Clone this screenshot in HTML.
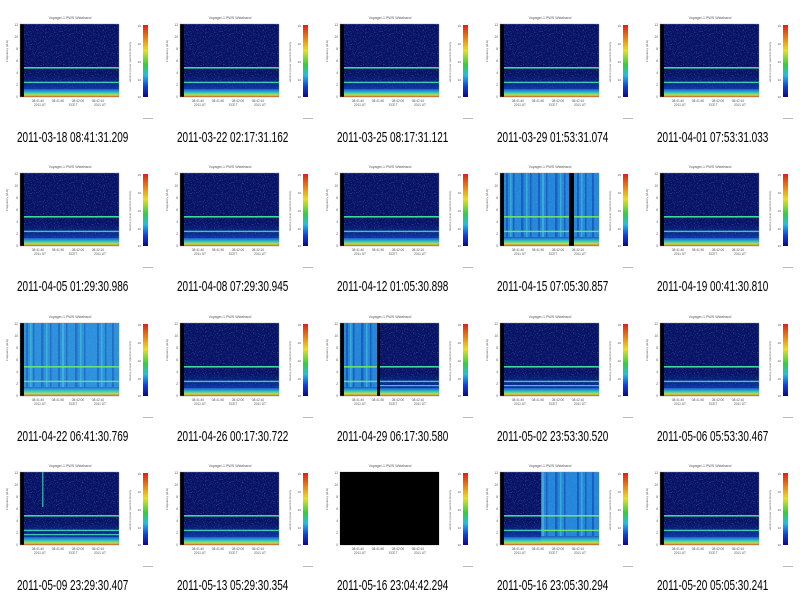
<!DOCTYPE html>
<html><head><meta charset="utf-8"><style>
body{margin:0;width:800px;height:596px;background:#fff;position:relative;overflow:hidden;font-family:"Liberation Sans",sans-serif}
.c{position:absolute;width:160px;height:149px}
.c svg{position:absolute;left:0;top:0}
.cap{position:absolute;left:17px;top:128px;font-size:15px;line-height:20px;color:#000;white-space:nowrap;transform:scaleX(0.665);transform-origin:0 0}
</style></head><body>
<svg width="0" height="0" style="position:absolute">
<defs>
<filter id="nz" x="0" y="0" width="1" height="1"><feTurbulence type="fractalNoise" baseFrequency="0.9" numOctaves="1" seed="3"/><feColorMatrix type="matrix" values="0 0 0 0 0.15  0 0 0 0 0.4  0 0 0 0 1  0 0 0 2.2 -1.2"/></filter>
<linearGradient id="cb" x1="0" y1="0" x2="0" y2="1"><stop offset="0" stop-color="#e02010"/><stop offset="0.2" stop-color="#f08a10"/><stop offset="0.35" stop-color="#e8e020"/><stop offset="0.55" stop-color="#30d040"/><stop offset="0.7" stop-color="#20c0e0"/><stop offset="0.85" stop-color="#1040e0"/><stop offset="1" stop-color="#0a0a80"/></linearGradient>
<linearGradient id="bot" x1="0" y1="0" x2="0" y2="1"><stop offset="0" stop-color="#1a5ad0"/><stop offset="0.45" stop-color="#30c8c0"/><stop offset="0.75" stop-color="#c0e040"/><stop offset="1" stop-color="#e05020"/></linearGradient>
<linearGradient id="fade" x1="0" y1="0" x2="0" y2="1"><stop offset="0" stop-color="#1040c0" stop-opacity="0"/><stop offset="1" stop-color="#1050d0" stop-opacity="0.6"/></linearGradient>
<g id="dark">
<rect x="20" y="24" width="99" height="73" fill="#081264"/>
<rect x="20" y="24" width="99" height="73" filter="url(#nz)" opacity="0.8"/>
<rect x="20" y="75" width="99" height="14" fill="url(#fade)"/>
<rect x="20" y="67" width="99" height="1.6" fill="#40d8a0"/>
<rect x="20" y="81.7" width="99" height="1.4" fill="#40c8b0"/>
<rect x="20" y="89" width="99" height="8" fill="url(#bot)"/>
</g>
<g id="bright">
<rect x="20" y="24" width="99" height="73" fill="#2486d8"/>
<rect x="20" y="24" width="99" height="73" filter="url(#nz)" opacity="0.7"/>
<g fill="#1238a8" opacity="0.5"><rect x="26" y="24" width="2" height="65"/><rect x="33" y="24" width="1.5" height="65"/><rect x="41" y="24" width="2.5" height="65"/><rect x="50" y="24" width="1.5" height="65"/><rect x="58" y="24" width="2" height="65"/><rect x="66" y="24" width="1.5" height="65"/><rect x="75" y="24" width="2.5" height="65"/><rect x="84" y="24" width="1.5" height="65"/><rect x="97" y="24" width="2" height="65"/><rect x="105" y="24" width="1.5" height="65"/><rect x="112" y="24" width="2" height="65"/></g>
<g fill="#50d8d0" opacity="0.45"><rect x="30" y="24" width="1.5" height="65"/><rect x="46" y="24" width="1.5" height="65"/><rect x="62" y="24" width="2" height="65"/><rect x="80" y="24" width="1.5" height="65"/><rect x="101" y="24" width="1.5" height="65"/></g>
<rect x="20" y="67" width="99" height="1.6" fill="#70e070"/>
<rect x="20" y="81.7" width="99" height="1.4" fill="#70e070"/>
<rect x="20" y="88" width="99" height="9" fill="url(#bot)"/>
</g>
<g id="frame">
<text x="70" y="19" font-size="3.6" fill="#555" text-anchor="middle" font-family="Liberation Sans">Voyager-1 PWS Wideband</text>
<rect x="20" y="24" width="4" height="73" fill="#000"/>
<rect x="20" y="24" width="99" height="73" fill="none" stroke="#888" stroke-width="0.4"/>
<g font-size="3.2" fill="#555" font-family="Liberation Sans" text-anchor="end"><text x="18" y="26">12</text><text x="18" y="38">10</text><text x="18" y="50">8</text><text x="18" y="62">6</text><text x="18" y="74">4</text><text x="18" y="86">2</text><text x="18" y="98">0</text></g>
<text x="8" y="62" font-size="3" fill="#555" transform="rotate(-90 8 62)" font-family="Liberation Sans">Frequency (kHz)</text>
<rect x="143" y="25" width="5" height="72" fill="url(#cb)"/>
<text x="131" y="62" font-size="3" fill="#666" transform="rotate(-90 131 62)" font-family="Liberation Sans" text-anchor="middle">relative power spectral density</text>
<g font-size="3" fill="#555" font-family="Liberation Sans" text-anchor="end"><text x="141" y="27">10</text><text x="141" y="45">10</text><text x="141" y="63">10</text><text x="141" y="81">10</text><text x="141" y="98">10</text></g>
<g font-size="3.2" fill="#555" font-family="Liberation Sans" text-anchor="middle"><text x="38" y="102">08:41:40</text><text x="58" y="102">08:41:50</text><text x="78" y="102">08:42:00</text><text x="98" y="102">08:42:10</text><text x="40" y="106">2011 UT</text><text x="73" y="106">SCET</text><text x="100" y="106">2011 UT</text></g>
<rect x="143" y="118" width="10" height="0.8" fill="#aaa"/>
</g>
<clipPath id="cl04"><rect x="20" y="24" width="37" height="73"/></clipPath>
<clipPath id="cr04"><rect x="60" y="24" width="59" height="73"/></clipPath>
<clipPath id="cl16"><rect x="20" y="24" width="41" height="73"/></clipPath>
<clipPath id="cr16"><rect x="61" y="24" width="58" height="73"/></clipPath>
</defs></svg>

<div class="c" style="left:0;top:0"><svg width="160" height="149"><use href="#dark"/><use href="#frame"/></svg><div class="cap">2011-03-18 08:41:31.209</div></div>
<div class="c" style="left:160px;top:0"><svg width="160" height="149"><use href="#dark"/><use href="#frame"/></svg><div class="cap">2011-03-22 02:17:31.162</div></div>
<div class="c" style="left:320px;top:0"><svg width="160" height="149"><use href="#dark"/><use href="#frame"/></svg><div class="cap">2011-03-25 08:17:31.121</div></div>
<div class="c" style="left:480px;top:0"><svg width="160" height="149"><use href="#dark"/><use href="#frame"/></svg><div class="cap">2011-03-29 01:53:31.074</div></div>
<div class="c" style="left:640px;top:0"><svg width="160" height="149"><use href="#dark"/><use href="#frame"/></svg><div class="cap">2011-04-01 07:53:31.033</div></div>

<div class="c" style="left:0;top:149px"><svg width="160" height="149"><use href="#dark"/><use href="#frame"/></svg><div class="cap">2011-04-05 01:29:30.986</div></div>
<div class="c" style="left:160px;top:149px"><svg width="160" height="149"><use href="#dark"/><use href="#frame"/></svg><div class="cap">2011-04-08 07:29:30.945</div></div>
<div class="c" style="left:320px;top:149px"><svg width="160" height="149"><use href="#dark"/><use href="#frame"/></svg><div class="cap">2011-04-12 01:05:30.898</div></div>
<div class="c" style="left:480px;top:149px"><svg width="160" height="149"><use href="#bright"/><rect x="89" y="24" width="5" height="73" fill="#000"/><use href="#frame"/></svg><div class="cap">2011-04-15 07:05:30.857</div></div>
<div class="c" style="left:640px;top:149px"><svg width="160" height="149"><use href="#dark"/><use href="#frame"/></svg><div class="cap">2011-04-19 00:41:30.810</div></div>

<div class="c" style="left:0;top:299px"><svg width="160" height="149"><use href="#bright"/><rect x="20" y="24" width="99" height="73" fill="#60d0f0" opacity="0.15"/><use href="#frame"/></svg><div class="cap">2011-04-22 06:41:30.769</div></div>
<div class="c" style="left:160px;top:299px"><svg width="160" height="149"><use href="#dark"/><use href="#frame"/></svg><div class="cap">2011-04-26 00:17:30.722</div></div>
<div class="c" style="left:320px;top:299px"><svg width="160" height="149"><g clip-path="url(#cl04)"><use href="#bright"/></g><g clip-path="url(#cr04)"><use href="#dark"/><rect x="60" y="86" width="59" height="1.2" fill="#40c8b0"/></g><rect x="57" y="24" width="3" height="73" fill="#000"/><use href="#frame"/></svg><div class="cap">2011-04-29 06:17:30.580</div></div>
<div class="c" style="left:480px;top:299px"><svg width="160" height="149"><use href="#dark"/><rect x="20" y="86" width="99" height="1.2" fill="#40c8b0"/><use href="#frame"/></svg><div class="cap">2011-05-02 23:53:30.520</div></div>
<div class="c" style="left:640px;top:299px"><svg width="160" height="149"><use href="#dark"/><use href="#frame"/></svg><div class="cap">2011-05-06 05:53:30.467</div></div>

<div class="c" style="left:0;top:448px"><svg width="160" height="149"><use href="#dark"/><rect x="20" y="86" width="99" height="1.2" fill="#40c8b0"/><rect x="42" y="24" width="1.5" height="35" fill="#30a0a0"/><use href="#frame"/></svg><div class="cap">2011-05-09 23:29:30.407</div></div>
<div class="c" style="left:160px;top:448px"><svg width="160" height="149"><use href="#dark"/><use href="#frame"/></svg><div class="cap">2011-05-13 05:29:30.354</div></div>
<div class="c" style="left:320px;top:448px"><svg width="160" height="149"><use href="#frame"/><rect x="20" y="24" width="99" height="73" fill="#000"/></svg><div class="cap">2011-05-16 23:04:42.294</div></div>
<div class="c" style="left:480px;top:448px"><svg width="160" height="149"><g clip-path="url(#cl16)"><use href="#dark"/></g><g clip-path="url(#cr16)"><use href="#bright"/></g><use href="#frame"/></svg><div class="cap">2011-05-16 23:05:30.294</div></div>
<div class="c" style="left:640px;top:448px"><svg width="160" height="149"><use href="#dark"/><use href="#frame"/></svg><div class="cap">2011-05-20 05:05:30.241</div></div>
</body></html>
